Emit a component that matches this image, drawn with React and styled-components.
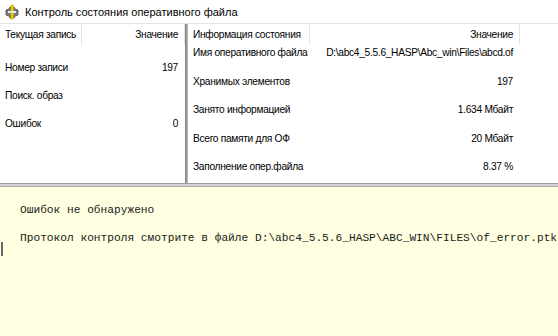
import styled, { createGlobalStyle } from "styled-components";

const GlobalStyle = createGlobalStyle`
  html, body {
    margin: 0;
    padding: 0;
    background: #ffffff;
  }
  * {
    box-sizing: border-box;
  }
`;

const Window = styled.div`
  width: 558px;
  height: 336px;
  display: flex;
  flex-direction: column;
  overflow: hidden;
  background: #ffffff;
  font-family: "Liberation Sans", Arial, sans-serif;
  font-size: 10.2px;
  letter-spacing: -0.3px;
  color: #000000;
`;

const TitleBar = styled.div`
  height: 24px;
  flex: none;
  display: flex;
  align-items: center;
  gap: 5px;
  padding-left: 4px;
  font-size: 11px;
  letter-spacing: 0;
  border-bottom: 1px solid #e3e3e3;
`;

const Panels = styled.div`
  height: 159px;
  flex: none;
  display: flex;
  overflow: hidden;
`;

const Grid = styled.div`
  width: ${(p) => (p.$width ? `${p.$width}px` : "auto")};
  flex: ${(p) => (p.$width ? "none" : "1")};
  display: flex;
  flex-direction: column;
  background: #ffffff;
  overflow: hidden;
`;

const HeaderRow = styled.div`
  height: 21px;
  flex: none;
  display: grid;
  grid-template-columns: ${(p) => p.$cols};
  align-items: center;
`;

const HeaderCell = styled.div`
  height: 100%;
  display: flex;
  align-items: center;
  justify-content: ${(p) => (p.$right ? "flex-end" : "flex-start")};
  padding: 0 ${(p) => (p.$right ? "6px" : "5px")} 0 5px;
  border-right: 1px solid #e5e5e5;
  white-space: nowrap;
`;

const Body = styled.div`
  flex: none;
  padding-top: ${(p) => p.$top}px;
`;

const Row = styled.div`
  height: ${(p) => p.$h}px;
  display: grid;
  grid-template-columns: ${(p) => p.$cols};
  align-items: start;
  line-height: 16px;
`;

const Cell = styled.div`
  padding: 0 ${(p) => (p.$right ? "7px" : "5px")} 0 5px;
  text-align: ${(p) => (p.$right ? "right" : "left")};
  white-space: nowrap;
`;

const VSplit = styled.div`
  width: 3px;
  flex: none;
  background: #9c9c9c;
  border-left: 1px solid #8a8a8a;
  border-right: 1px solid #b4b4b4;
`;

const HSplit = styled.div`
  height: 4px;
  flex: none;
  background: #d2d2d2;
  border-top: 1px solid #9a9a9a;
  border-bottom: 1px solid #a8a8a8;
`;

const Log = styled.div`
  flex: 1;
  position: relative;
  background: #ffffe1;
  padding: 9px 0 0 20px;
  font-family: "Liberation Mono", "Courier New", monospace;
  font-size: 11.2px;
  letter-spacing: 0;
  line-height: 28px;
  color: #1a1a1a;
  white-space: pre;
  overflow: hidden;
`;

const Caret = styled.div`
  position: absolute;
  left: 1px;
  top: 55px;
  width: 2px;
  height: 14px;
  background: #6a6a6a;
`;

const AppIcon = () => (
  <svg width="16" height="16" viewBox="0 0 16 16">
    <path
      d="M2 6 L5 5 L6 3 L10 3 L11 5 L14 6 L14 11 L11 12 L10 14 L6 14 L5 12 L2 11 Z"
      fill="#7c7c7c"
      stroke="#4a4a4a"
      strokeWidth="0.8"
    />
    <rect x="7" y="1" width="2.4" height="14" fill="#f2d400" stroke="#b59a00" strokeWidth="0.5" />
    <rect x="4" y="7" width="8" height="2" fill="#e8e8e8" />
  </svg>
);

const leftCols = "82px 1fr";
const rightCols = "122px 210px 1fr";

const leftRows = [
  ["Номер записи", "197"],
  ["Поиск. образ", ""],
  ["Ошибок", "0"],
];

const rightRows = [
  ["Имя оперативного файла", "D:\\abc4_5.5.6_HASP\\Abc_win\\Files\\abcd.of"],
  ["Хранимых элементов", "197"],
  ["Занято информацией", "1.634 Мбайт"],
  ["Всего памяти для ОФ", "20 Мбайт"],
  ["Заполнение опер.файла", "8.37 %"],
];

export default function App() {
  return (
    <>
      <GlobalStyle />
      <Window>
        <TitleBar>
          <AppIcon />
          <span>Контроль состояния оперативного файла</span>
        </TitleBar>
        <Panels>
          <Grid $width={185}>
            <HeaderRow $cols={leftCols}>
              <HeaderCell>Текущая запись</HeaderCell>
              <HeaderCell $right>Значение</HeaderCell>
            </HeaderRow>
            <Body $top={15}>
              {leftRows.map(([name, value]) => (
                <Row key={name} $h={28} $cols={leftCols}>
                  <Cell>{name}</Cell>
                  <Cell $right>{value}</Cell>
                </Row>
              ))}
            </Body>
          </Grid>
          <VSplit />
          <Grid>
            <HeaderRow $cols={rightCols}>
              <HeaderCell>Информация состояния</HeaderCell>
              <HeaderCell $right>Значение</HeaderCell>
              <div />
            </HeaderRow>
            <Body $top={0}>
              {rightRows.map(([name, value]) => (
                <Row key={name} $h={28.6} $cols={rightCols}>
                  <Cell>{name}</Cell>
                  <Cell $right>{value}</Cell>
                  <div />
                </Row>
              ))}
            </Body>
          </Grid>
        </Panels>
        <HSplit />
        <Log>
          {"Ошибок не обнаружено\n"}
          {"Протокол контроля смотрите в файле D:\\abc4_5.5.6_HASP\\ABC_WIN\\FILES\\of_error.ptk"}
          <Caret />
        </Log>
      </Window>
    </>
  );
}
